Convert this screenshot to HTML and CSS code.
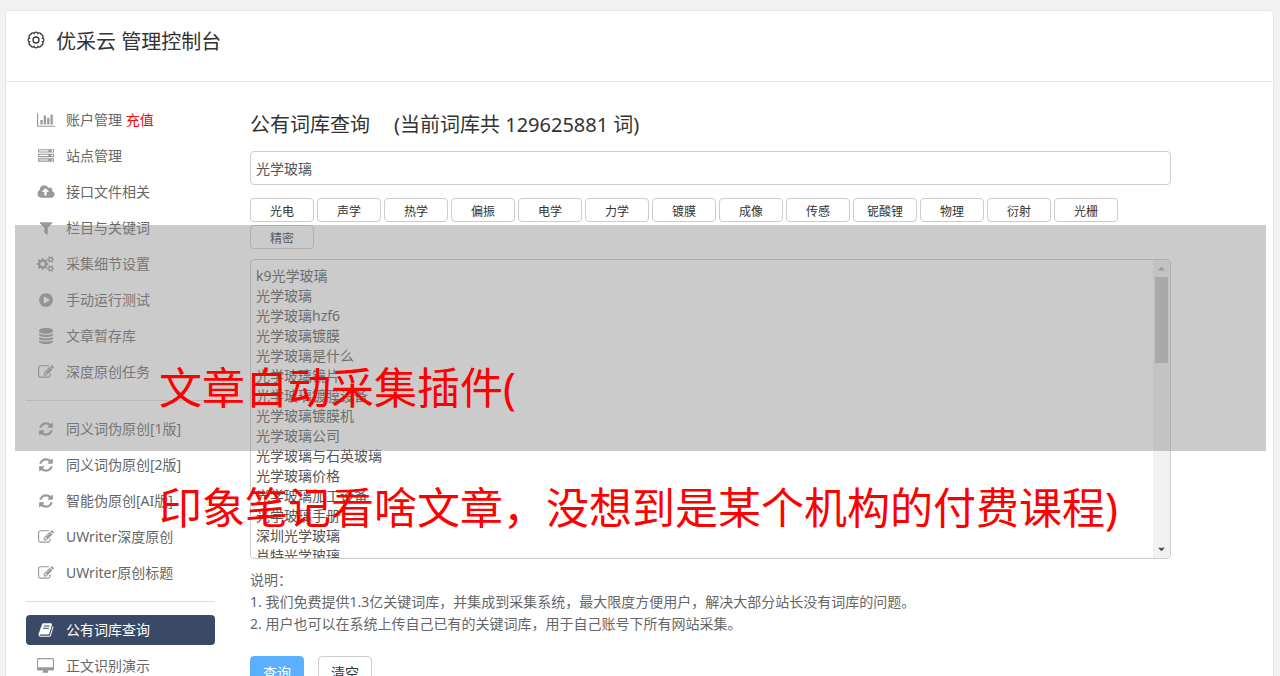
FILE: index.html
```html
<!DOCTYPE html>
<html lang="zh-CN">

<head>
  <meta charset="utf-8">
  <title>优采云 管理控制台</title>
  <link rel="stylesheet" href="styles.css">
</head>

<body>
  <svg class="sprite" xmlns="http://www.w3.org/2000/svg">
    <symbol id="i-edit" viewBox="0 0 1792 1792">
      <path d="M888 1184l116-116-152-152-116 116v56h96v96h56zm440-720q-16-16-33 1l-350 350q-17 17-1 33t33-1l350-350q17-17 1-33zm80 594v190q0 119-84.500 203.500t-203.500 84.500h-832q-119 0-203.500-84.500t-84.500-203.500v-832q0-119 84.500-203.500t203.500-84.500h832q63 0 117 25 15 7 18 23 3 17-9 29l-49 49q-14 14-32 8-23-6-45-6h-832q-66 0-113 47t-47 113v832q0 66 47 113t113 47h832q66 0 113-47t47-113v-126q0-13 9-22l64-64q15-15 35-7t20 29zm-96-738l288 288-672 672h-288v-288zm444 132l-92 92-288-288 92-92q28-28 68-28t68 28l152 152q28 28 28 68t-28 68z"/>
    </symbol>
    <symbol id="i-refresh" viewBox="0 0 1792 1792">
      <path d="M1639 1056q0 5-1 7-64 268-268 434.500t-478 166.500q-146 0-282.500-55t-243.500-157l-129 129q-19 19-45 19t-45-19-19-45v-448q0-26 19-45t45-19h448q26 0 45 19t19 45-19 45l-137 137q71 66 161 102t187 36q134 0 250-65t186-179q11-17 53-117 8-23 30-23h192q13 0 22.500 9.500t9.500 22.500zm25-800v448q0 26-19 45t-45 19h-448q-26 0-45-19t-19-45 19-45l138-138q-148-137-349-137-134 0-250 65t-186 179q-11 17-53 117-8 23-30 23h-199q-13 0-22.500-9.500t-9.500-22.500v-7q65-268 270-434.500t480-166.500q146 0 284 55.500t245 156.500l130-129q19-19 45-19t45 19 19 45z"/>
    </symbol>
  </svg>

  <div class="panel">
    <header class="panel-header">
      <svg class="logo" viewBox="0 0 20 20">
        <path d="M8.100 3.500A2 2 0 0 1 11.900 3.500A2 2 0 0 1 15.300 4.700A2 2 0 0 1 16.500 8.100A2 2 0 0 1 16.500 11.900A2 2 0 0 1 15.300 15.300A2 2 0 0 1 11.900 16.500A2 2 0 0 1 8.100 16.500A2 2 0 0 1 4.700 15.300A2 2 0 0 1 3.500 11.900A2 2 0 0 1 3.500 8.100A2 2 0 0 1 4.700 4.700A2 2 0 0 1 8.100 3.500Z"/>
        <circle cx="10" cy="10" r="3"/>
      </svg>
      <h1>优采云 管理控制台</h1>
    </header>

    <div class="panel-body">
      <nav class="sidebar">
        <ul>
          <li><a href="#">
            <svg class="wide" viewBox="0 0 2048 1792"><path d="M640 896v512h-256v-512h256zm384-512v1024h-256v-1024h256zm1024 1152v128h-2048v-1536h128v1408h1920zm-640-896v768h-256v-768h256zm384-384v1152h-256v-1152h256z"/></svg>
            <span>账户管理 <em>充值</em></span></a></li>
          <li><a href="#">
            <svg viewBox="0 0 1792 1792"><path d="M128 1408h1024v-128h-1024v128zm0-512h1024v-128h-1024v128zm1568 448q0-40-28-68t-68-28-68 28-28 68 28 68 68 28 68-28 28-68zm-1568-960h1024v-128h-1024v128zm1568 448q0-40-28-68t-68-28-68 28-28 68 28 68 68 28 68-28 28-68zm0-512q0-40-28-68t-68-28-68 28-28 68 28 68 68 28 68-28 28-68zm96 832v384h-1792v-384h1792zm0-512v384h-1792v-384h1792zm0-512v384h-1792v-384h1792z"/></svg>
            <span>站点管理</span></a></li>
          <li><a href="#">
            <svg class="wide" viewBox="0 0 1920 1792"><path d="M1280 864q0-14-9-23l-352-352q-9-9-23-9t-23 9l-351 351q-10 12-10 24 0 14 9 23t23 9h224v352q0 13 9.500 22.500t22.500 9.500h192q13 0 22.500-9.500t9.500-22.500v-352h224q13 0 22.500-9.500t9.500-22.500zm640 288q0 159-112.500 271.500t-271.500 112.500h-1088q-185 0-316.500-131.500t-131.500-316.500q0-130 70-240t188-165q-2-30-2-43 0-212 150-362t362-150q156 0 285.500 87t188.500 231q71-62 166-62 106 0 181 75t75 181q0 76-41 138 130 31 213.500 135.500t83.500 238.500z"/></svg>
            <span>接口文件相关</span></a></li>
          <li><a href="#">
            <svg viewBox="0 0 1792 1792"><path d="M1595 295q17 41-14 70l-493 493v742q0 42-39 59-13 5-25 5-27 0-45-19l-256-256q-19-19-19-45v-486l-493-493q-31-29-14-70 17-39 59-39h1280q42 0 59 39z"/></svg>
            <span>栏目与关键词</span></a></li>
          <li><a href="#">
            <svg class="wide" viewBox="0 0 1920 1792"><path d="M832 896q0-106-75-181t-181-75-181 75-75 181 75 181 181 75 181-75 75-181zm768 512q0-52-38-90t-90-38-90 38-38 90q0 53 37.500 90.500t90.500 37.500 90.500-37.500 37.500-90.500zm0-1024q0-52-38-90t-90-38-90 38-38 90q0 53 37.500 90.500t90.500 37.500 90.500-37.500 37.500-90.500zm-384 421v185q0 10-7 19.500t-16 10.500l-155 24q-11 35-32 76 34 48 90 115 7 11 7 20 0 12-7 19-23 30-82.500 89.500t-78.500 59.500q-11 0-21-7l-115-90q-37 19-77 31-11 108-23 155-7 24-30 24h-186q-11 0-20-7.500t-10-17.500l-23-153q-34-10-75-31l-118 89q-7 7-20 7-11 0-21-8-144-133-144-160 0-9 7-19 10-14 41-53t47-61q-23-44-35-82l-152-24q-10-1-17-9.500t-7-19.500v-185q0-10 7-19.500t16-10.500l155-24q11-35 32-76-34-48-90-115-7-11-7-20 0-12 7-20 22-30 82-89t79-59q11 0 21 7l115 90q34-18 77-32 11-108 23-154 7-24 30-24h186q11 0 20 7.500t10 17.500l23 153q34 10 75 31l118-89q8-7 20-7 11 0 21 8 144 133 144 160 0 8-7 19-12 16-42 54t-45 60q23 48 34 82l152 23q10 2 17 10.500t7 19.500zm640 533v140q0 16-149 31-12 27-30 52 51 113 51 138 0 4-4 7-122 71-124 71-8 0-46-47t-52-68q-20 2-30 2t-30-2q-14 21-52 68t-46 47q-2 0-124-71-4-3-4-7 0-25 51-138-18-25-30-52-149-15-149-31v-140q0-16 149-31 13-29 30-52-51-113-51-138 0-4 4-7 4-2 35-20t59-34 30-16q8 0 46 46.500t52 67.500q20-2 30-2t30 2q51-71 92-112l6-2q4 0 124 70 4 3 4 7 0 25-51 138 17 23 30 52 149 15 149 31zm0-1024v140q0 16-149 31-12 27-30 52 51 113 51 138 0 4-4 7-122 71-124 71-8 0-46-47t-52-68q-20 2-30 2t-30-2q-14 21-52 68t-46 47q-2 0-124-71-4-3-4-7 0-25 51-138-18-25-30-52-149-15-149-31v-140q0-16 149-31 13-29 30-52-51-113-51-138 0-4 4-7 4-2 35-20t59-34 30-16q8 0 46 46.500t52 67.500q20-2 30-2t30 2q51-71 92-112l6-2q4 0 124 70 4 3 4 7 0 25-51 138 17 23 30 52 149 15 149 31z"/></svg>
            <span>采集细节设置</span></a></li>
          <li><a href="#">
            <svg viewBox="0 0 1792 1792"><path d="M896 128q209 0 385.500 103t279.500 279.500 103 385.500-103 385.500-279.500 279.500-385.500 103-385.500-103-279.500-279.500-103-385.500 103-385.500 279.500-279.500 385.500-103zm384 823q32-18 32-55t-32-55l-544-320q-31-19-64-1-32 19-32 56v640q0 37 32 56 16 8 32 8 17 0 32-9z"/></svg>
            <span>手动运行测试</span></a></li>
          <li><a href="#">
            <svg viewBox="0 0 1792 1792"><path d="M896 768q237 0 443-43t325-127v170q0 69-103 128t-280 93.500-385 34.500-385-34.500-280-93.500-103-128v-170q119 84 325 127t443 43zm0 768q237 0 443-43t325-127v170q0 69-103 128t-280 93.500-385 34.500-385-34.500-280-93.500-103-128v-170q119 84 325 127t443 43zm0-384q237 0 443-43t325-127v170q0 69-103 128t-280 93.500-385 34.500-385-34.500-280-93.500-103-128v-170q119 84 325 127t443 43zm0-1152q208 0 385 34.500t280 93.500 103 128v128q0 69-103 128t-280 93.500-385 34.500-385-34.500-280-93.500-103-128v-128q0-69 103-128t280-93.500 385-34.500z"/></svg>
            <span>文章暂存库</span></a></li>
          <li><a href="#"><svg><use href="#i-edit"/></svg><span>深度原创任务</span></a></li>
        </ul>
        <hr>
        <ul>
          <li><a href="#"><svg><use href="#i-refresh"/></svg><span>同义词伪原创[1版]</span></a></li>
          <li><a href="#"><svg><use href="#i-refresh"/></svg><span>同义词伪原创[2版]</span></a></li>
          <li><a href="#"><svg><use href="#i-refresh"/></svg><span>智能伪原创[AI版]</span></a></li>
          <li><a href="#"><svg><use href="#i-edit"/></svg><span>UWriter深度原创</span></a></li>
          <li><a href="#"><svg><use href="#i-edit"/></svg><span>UWriter原创标题</span></a></li>
        </ul>
        <hr>
        <ul>
          <li><a href="#" class="active">
            <svg viewBox="0 0 1792 1792"><path d="M1703 478q40 57 18 129l-275 906q-19 64-76.500 107.500t-122.500 43.500h-923q-77 0-148.500-53.500t-99.500-131.500q-24-67-2-127 0-4 3-27t4-37q1-8-3-21.500t-3-19.500q2-11 8-21t16.500-23.500 16.500-23.500q23-38 45-91.500t30-91.500q3-10 .5-30t-.5-28q3-11 17-28t17-23q21-36 42-92t25-90q1-9-2.500-32t.5-28q4-13 22-30.500t22-22.500q19-26 42.500-84.500t27.500-96.500q1-8-3-25.500t-2-26.500q2-8 9-18t18-23 17-21q8-12 16.500-30.500t15-35 16-36 19.500-32 26.500-23.500 36-11.500 47.500 5.500l-1 3q38-9 51-9h761q74 0 114 56t18 130l-274 906q-36 119-71.500 153.500t-128.500 34.500h-869q-27 0-38 15-11 16-1 43 24 70 144 70h923q29 0 56-15.500t35-41.500l300-987q7-22 5-57 38 15 59 43zm-1064 2q-4 13 2 22.500t20 9.500h608q13 0 25.500-9.500t16.500-22.500l21-64q4-13-2-22.500t-20-9.500h-608q-13 0-25.500 9.500t-16.500 22.500zm-83 256q-4 13 2 22.500t20 9.500h608q13 0 25.500-9.500t16.500-22.500l21-64q4-13-2-22.500t-20-9.500h-608q-13 0-25.500 9.500t-16.500 22.500z"/></svg>
            <span>公有词库查询</span></a></li>
          <li><a href="#">
            <svg class="wide" viewBox="0 0 1920 1792"><path d="M1728 992v-832q0-13-9.500-22.500t-22.500-9.500h-1600q-13 0-22.500 9.500t-9.500 22.500v832q0 13 9.500 22.500t22.500 9.500h1600q13 0 22.500-9.500t9.500-22.500zm128-832v1088q0 66-47 113t-113 47h-544q0 37 16 77.500t32 71 16 43.500q0 26-19 45t-45 19h-512q-26 0-45-19t-19-45q0-14 16-44t32-70 16-78h-544q-66 0-113-47t-47-113v-1088q0-66 47-113t113-47h1600q66 0 113 47t47 113z"/></svg>
            <span>正文识别演示</span></a></li>
        </ul>
      </nav>

      <main class="content">
        <form class="query">
          <h2><label for="keyword">公有词库查询</label><small>(当前词库共 129625881 词)</small></h2>
          <input id="keyword" class="keyword" type="text" value="光学玻璃">
          <div class="tags">
            <button type="button">光电</button>
            <button type="button">声学</button>
            <button type="button">热学</button>
            <button type="button">偏振</button>
            <button type="button">电学</button>
            <button type="button">力学</button>
            <button type="button">镀膜</button>
            <button type="button">成像</button>
            <button type="button">传感</button>
            <button type="button">铌酸锂</button>
            <button type="button">物理</button>
            <button type="button">衍射</button>
            <button type="button">光栅</button>
            <button type="button">精密</button>
          </div>
          <div class="result-box">
            <textarea id="result" class="result">k9光学玻璃
光学玻璃
光学玻璃hzf6
光学玻璃镀膜
光学玻璃是什么
光学玻璃镜片
光学玻璃镀膜设备
光学玻璃镀膜机
光学玻璃公司
光学玻璃与石英玻璃
光学玻璃价格
光学玻璃加工设备
光学玻璃手册
深圳光学玻璃
肖特光学玻璃</textarea>
            <div class="scrollbar" aria-hidden="true">
              <svg class="arrow up" viewBox="0 0 8 4"><path d="M0 4L4 0L8 4Z"/></svg>
              <div class="track"><div class="thumb"></div></div>
              <svg class="arrow down" viewBox="0 0 8 4"><path d="M0 0L4 4L8 0Z"/></svg>
            </div>
          </div>
          <div class="notes">
            <label for="result">说明：</label>
            <p>1. 我们免费提供1.3亿关键词库，并集成到采集系统，最大限度方便用户，解决大部分站长没有词库的问题。</p>
            <p>2. 用户也可以在系统上传自己已有的关键词库，用于自己账号下所有网站采集。</p>
          </div>
          <div class="actions">
            <button type="submit" class="primary">查询</button>
            <button type="reset">清空</button>
          </div>
        </form>
      </main>
    </div>
  </div>

  <div class="banner">
    <p>文章自动采集插件(</p>
    <p>印象笔记看啥文章，没想到是某个机构的付费课程)</p>
  </div>
</body>

</html>
```
FILE: styles.css
```css
* {
  box-sizing: border-box;
  margin: 0;
  padding: 0;
}

body {
  position: relative;
  padding: 10px 6px 0 5px;
  background: #f2f2f2;
  color: #555;
  font: 14px/20px "Noto Sans", "Noto Sans CJK SC", sans-serif;
}

button,
input,
textarea {
  font: inherit;
  color: inherit;
}

.sprite {
  display: none;
}

.panel {
  background: #fff;
  border: 1px solid #e5e5e5;
  border-radius: 4px;
}

.panel-header {
  display: flex;
  align-items: flex-start;
  gap: 10px;
  padding: 16px 20px 24px;
  border-bottom: 1px solid #e5e5e5;
  color: #333;
}

.panel-header h1 {
  font-size: 20px;
  line-height: 30px;
  font-weight: 400;
}

.logo {
  width: 20px;
  height: 26px;
  fill: none;
  stroke: #333;
  stroke-width: 1.3;
}

.panel-body {
  display: flex;
  gap: 35px;
  padding: 23px 0 20px 20px;
}

.sidebar {
  flex: none;
  width: 189px;
}

.sidebar ul {
  list-style: none;
}

.sidebar li {
  padding-bottom: 6px;
}

.sidebar a {
  display: grid;
  grid-template-columns: 40px 1fr;
  align-items: center;
  height: 30px;
  border-radius: 4px;
  color: #666;
  text-decoration: none;
}

.sidebar svg {
  justify-self: center;
  width: 16px;
  height: 16px;
  fill: #999;
}

.sidebar svg.wide {
  width: 18px;
}

.sidebar em {
  color: #f00;
  font-style: normal;
}

.sidebar a.active {
  background: #3a4a66;
  color: #fff;
}

.sidebar a.active svg {
  fill: #fff;
}

.sidebar hr {
  margin: 7px 0 13px;
  border: none;
  border-top: 1px solid #ddd;
}

.content {
  flex: 1;
  min-width: 0;
}

.query {
  width: 90%;
}

.query h2 {
  display: flex;
  gap: 24px;
  padding: 5px 0 11px;
  color: #333;
  font-size: 20px;
  line-height: 30px;
  font-weight: 400;
}

.query small {
  font-size: 20px;
}

.keyword,
.result {
  display: block;
  width: 100%;
  padding: 6px 5px;
  border: 1px solid #ccc;
  border-radius: 4px;
  background: #fff;
}

.keyword {
  height: 34px;
}

.tags {
  display: flex;
  flex-wrap: wrap;
  gap: 3px;
  padding: 13px 0 10px;
}

.tags button {
  width: 64px;
  height: 24px;
  padding-top: 3px;
  border: 1px solid #ccc;
  border-radius: 4px;
  background: #fff;
  color: #333;
  font-size: 12px;
}

.result-box {
  position: relative;
}

.result {
  height: 300px;
  padding-right: 22px;
  resize: none;
  overflow: hidden;
}

.scrollbar {
  position: absolute;
  top: 1px;
  right: 1px;
  bottom: 1px;
  display: flex;
  flex-direction: column;
  width: 17px;
  background: #f1f1f1;
  border-radius: 0 3px 3px 0;
}

.scrollbar .arrow {
  width: 17px;
  height: 17px;
  padding: 6px 5px;
  fill: #505050;
}

.scrollbar .up {
  fill: #a3a3a3;
}

.scrollbar .track {
  flex: 1;
  padding: 0 2px;
}

.scrollbar .thumb {
  height: 86px;
  background: #c1c1c1;
}

.notes {
  padding: 10px 0 21px;
  color: #666;
  line-height: 22px;
}

.notes label {
  display: block;
}

.actions {
  display: flex;
  gap: 14px;
}

.actions button {
  width: 54px;
  height: 34px;
  border: 1px solid #ccc;
  border-radius: 4px;
  background: #fff;
  color: #333;
}

.actions .primary {
  border-color: #5aafff;
  background: #5aafff;
  color: #fff;
}

/* headline laid over the page */
.banner {
  position: absolute;
  top: 225px;
  left: 15px;
  right: 14px;
  height: 226px;
  padding: 103px 0 0 144px;
  background: rgba(140, 140, 140, .45);
  color: #f00;
  font-size: 43px;
  line-height: 120px;
  white-space: nowrap;
  pointer-events: none;
}
```
